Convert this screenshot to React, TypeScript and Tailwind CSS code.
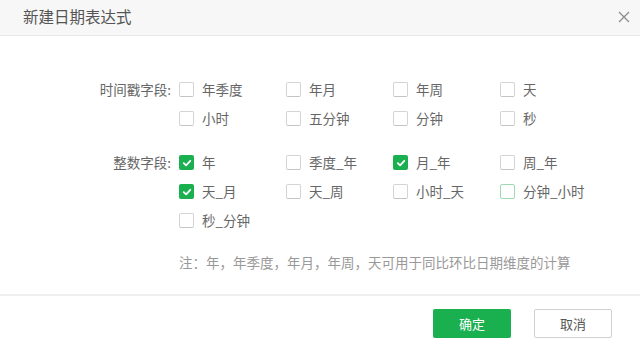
import React from "react";

type Opt = { label: string; checked?: boolean; hover?: boolean };

const ts: Opt[] = [
  { label: "年季度" },
  { label: "年月" },
  { label: "年周" },
  { label: "天" },
  { label: "小时" },
  { label: "五分钟" },
  { label: "分钟" },
  { label: "秒" },
];

const ints: Opt[] = [
  { label: "年", checked: true },
  { label: "季度_年" },
  { label: "月_年", checked: true },
  { label: "周_年" },
  { label: "天_月", checked: true },
  { label: "天_周" },
  { label: "小时_天" },
  { label: "分钟_小时", hover: true },
  { label: "秒_分钟" },
];

function Box({ o }: { o: Opt }) {
  if (o.checked) {
    return (
      <span className="flex h-[15px] w-[15px] items-center justify-center rounded-[2px] bg-[#1aaf4f]">
        <svg width="10" height="10" viewBox="0 0 10 10">
          <path d="M1.8 5.2 L4.1 7.4 L8.3 2.8" fill="none" stroke="#fff" strokeWidth="1.8" strokeLinecap="round" strokeLinejoin="round" />
        </svg>
      </span>
    );
  }
  return (
    <span
      className={
        o.hover
          ? "h-[15px] w-[15px] rounded-[2px] border border-[#9fd9b3] bg-white"
          : "h-[15px] w-[15px] rounded-[2px] border border-[#d4d4d4] border-b-[#c4c4c4] bg-white"
      }
    />
  );
}

function Section({ label, opts }: { label: string; opts: Opt[] }) {
  return (
    <div className="flex">
      <div className="h-[29px] w-[179px] pr-[8px] text-right leading-[29px] text-[13.5px] text-[#666]">{label}</div>
      <div className="grid grid-cols-[107px_107px_107px_107px]">
        {opts.map((o) => (
          <div key={o.label} className="flex h-[29px] items-center">
            <Box o={o} />
            <span className="ml-[8px] text-[13.5px] text-[#666]">{o.label}</span>
          </div>
        ))}
      </div>
    </div>
  );
}

export default function App() {
  return (
    <div
      className="flex h-[347px] w-[640px] flex-col bg-white"
      style={{ fontFamily: '"Noto Sans CJK SC", "Noto Sans", sans-serif' }}
    >
      <div className="flex h-[36px] items-center justify-between border-b border-[#e8e8e8] bg-[#f7f7f7] pb-[2px] pl-[23px] pr-[9px]">
        <span className="text-[15.5px] text-[#555]">新建日期表达式</span>
        <svg width="12" height="12" viewBox="0 0 12 12" className="mr-[1px]">
          <path d="M1 1 L11 11 M11 1 L1 11" stroke="#8a8a8a" strokeWidth="1.2" fill="none" />
        </svg>
      </div>
      <div className="flex flex-1 flex-col pt-[39px]">
        <Section label="时间戳字段:" opts={ts} />
        <div className="mt-[15px]">
          <Section label="整数字段:" opts={ints} />
        </div>
        <div className="mt-[17px] pl-[179px] text-[13.5px] leading-[20px] text-[#999]">
          注：年，年季度，年月，年周，天可用于同比环比日期维度的计算
        </div>
      </div>
      <div className="flex h-[53px] justify-end gap-[23px] border-t-2 border-[#f0f0f0] pr-[28px] pt-[13px]">
        <button className="h-[29px] w-[78px] rounded-[2px] bg-[#1aaf4f] text-[13px] text-white">确定</button>
        <button className="h-[29px] w-[78px] rounded-[2px] border border-[#d0d0d0] bg-white text-[13px] text-[#555]">取消</button>
      </div>
    </div>
  );
}
